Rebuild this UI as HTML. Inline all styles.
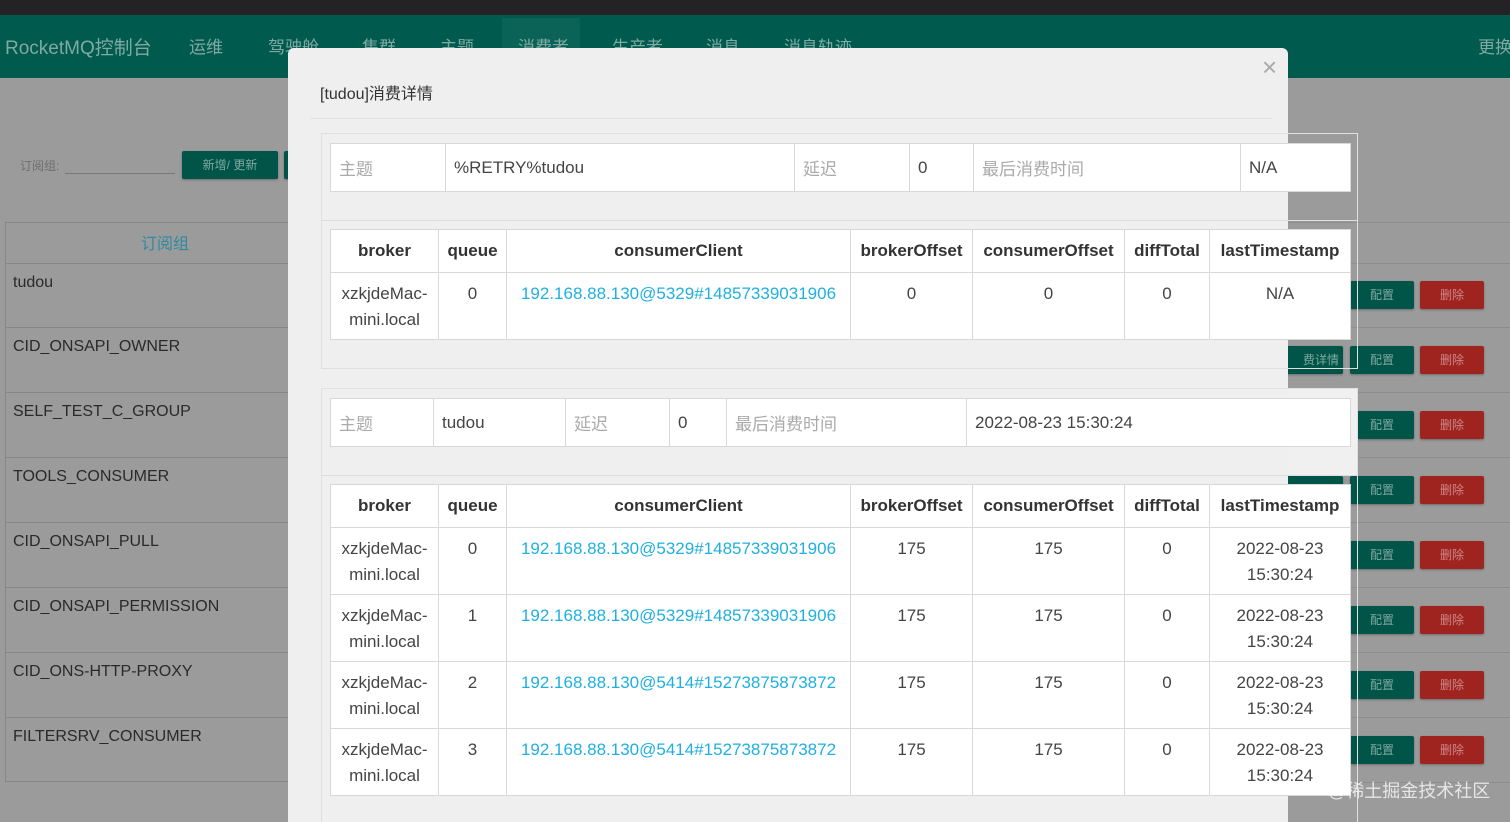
<!DOCTYPE html>
<html style="width:1510px;height:822px;overflow:hidden"><head><meta charset="utf-8"><style>
*{margin:0;padding:0;box-sizing:border-box}
body{width:1510px;height:822px;overflow:hidden;position:relative;background:#9b9b9b;font-family:"Liberation Sans","Noto Sans CJK SC",sans-serif;color:#333}
.a{position:absolute}
.top{left:0;top:0;width:1510px;height:15px;background:#232325}
.nav{left:0;top:15px;width:1510px;height:63px;background:#005a4e;color:#7fa9a2;font-size:17px}
.nav span{position:absolute;top:18px;white-space:nowrap}
.row{left:5px;width:300px;height:65px;border-top:1px solid #878787;font-size:16px;color:#2a2a2a;padding:10px 8px}
.btn{height:28px;width:64px;font-size:12px;color:#7fa9a2;text-align:center;line-height:28px;border-radius:2px;box-shadow:0 1px 2px rgba(0,0,0,.3)}
.g{background:#005448}.r{background:#9f2420;color:#c88}
.hl{left:290px;width:1220px;height:1px;background:#8e8e8e}
.modal{left:288px;top:48px;width:1000px;height:774px;background:#efefef;border-radius:6px 6px 0 0}
.panel{border:1px solid #ddd;left:321px;width:1037px}
table{position:absolute;border-collapse:collapse;background:#fff;table-layout:fixed;font-size:17px}
td,th{border:1px solid #d8d8d8;padding:0 8px;vertical-align:top}
th{font-weight:bold;color:#333;text-align:center;vertical-align:middle}
.info td{height:48px;vertical-align:middle;color:#444}
.info td.l{color:#aaa}
.d td{text-align:center;height:67px;padding-top:8px;line-height:26px;color:#444}
.d td.c{color:#1fb0e0}
</style></head><body>
<div class="a top"></div>
<div class="a nav">
<span style="left:5px;font-size:19px">RocketMQ控制台</span>
<span style="left:189px">运维</span><span style="left:268px">驾驶舱</span><span style="left:362px">集群</span><span style="left:440px">主题</span>
<span style="left:502px;top:3px;width:78px;height:60px;background:#0b6357"></span>
<span style="left:518px">消费者</span><span style="left:612px">生产者</span><span style="left:706px">消息</span><span style="left:784px">消息轨迹</span>
<span style="left:1478px">更换</span>
</div>
<div class="a" style="left:20px;top:157px;font-size:12px;color:#6e6e6e">订阅组:</div>
<div class="a" style="left:65px;top:173px;width:110px;height:1px;background:#777"></div>
<div class="a btn g" style="left:182px;top:151px;width:96px;height:28px">新增/ 更新</div>
<div class="a btn g" style="left:284px;top:151px;width:10px"></div>
<div class="a" style="left:5px;top:222px;width:300px;height:560px;border:1px solid #878787;border-right:none"></div>
<div class="a" style="left:5px;top:230px;width:320px;text-align:center;font-size:16px;color:#2f8aa0">订阅组</div>
<div class="a row" style="top:263px">tudou</div>
<div class="a row" style="top:327px">CID_ONSAPI_OWNER</div>
<div class="a row" style="top:392px">SELF_TEST_C_GROUP</div>
<div class="a row" style="top:457px">TOOLS_CONSUMER</div>
<div class="a row" style="top:522px">CID_ONSAPI_PULL</div>
<div class="a row" style="top:587px">CID_ONSAPI_PERMISSION</div>
<div class="a row" style="top:652px">CID_ONS-HTTP-PROXY</div>
<div class="a row" style="top:717px">FILTERSRV_CONSUMER</div>
<div class="a hl" style="top:222px"></div><div class="a hl" style="top:263px"></div>
<div class="a hl" style="top:327px"></div><div class="a hl" style="top:392px"></div><div class="a hl" style="top:457px"></div><div class="a hl" style="top:522px"></div><div class="a hl" style="top:587px"></div><div class="a hl" style="top:652px"></div><div class="a hl" style="top:717px"></div><div class="a hl" style="top:782px"></div>
<div class="a btn g" style="left:1350px;top:281px">配置</div><div class="a btn r" style="left:1420px;top:281px">删除</div>
<div class="a btn g" style="left:1278px;top:346px;width:65px;text-align:right;padding-right:4px">费详情</div>
<div class="a btn g" style="left:1350px;top:346px">配置</div><div class="a btn r" style="left:1420px;top:346px">删除</div>
<div class="a btn g" style="left:1350px;top:411px">配置</div><div class="a btn r" style="left:1420px;top:411px">删除</div>
<div class="a btn g" style="left:1278px;top:476px;width:65px"></div>
<div class="a btn g" style="left:1350px;top:476px">配置</div><div class="a btn r" style="left:1420px;top:476px">删除</div>
<div class="a btn g" style="left:1350px;top:541px">配置</div><div class="a btn r" style="left:1420px;top:541px">删除</div>
<div class="a btn g" style="left:1350px;top:606px">配置</div><div class="a btn r" style="left:1420px;top:606px">删除</div>
<div class="a btn g" style="left:1350px;top:671px">配置</div><div class="a btn r" style="left:1420px;top:671px">删除</div>
<div class="a btn g" style="left:1350px;top:736px">配置</div><div class="a btn r" style="left:1420px;top:736px">删除</div>

<div class="a modal"></div>
<div class="a" style="left:1262px;top:52px;font-size:26px;color:#aaa">×</div>
<div class="a" style="left:320px;top:80px;font-size:16px;color:#333">[tudou]消费详情</div>
<div class="a" style="left:310px;top:118px;width:962px;height:1px;background:#e2e2e2"></div>

<div class="a panel" style="top:133px;height:236px;border-color:#e0e0e0"></div>
<div class="a" style="left:321px;top:220px;width:1037px;height:1px;background:#ddd"></div>
<table class="info" style="left:330px;top:143px;width:1020px">
<col style="width:115px"><col style="width:349px"><col style="width:115px"><col style="width:64px"><col style="width:267px"><col style="width:110px">
<tr><td class="l">主题</td><td>%RETRY%tudou</td><td class="l">延迟</td><td>0</td><td class="l">最后消费时间</td><td>N/A</td></tr></table>
<table class="d" style="left:330px;top:229px;width:1020px">
<col style="width:108px"><col style="width:68px"><col style="width:344px"><col style="width:122px"><col style="width:152px"><col style="width:85px"><col style="width:141px">
<tr style="height:43px"><th>broker</th><th>queue</th><th>consumerClient</th><th>brokerOffset</th><th>consumerOffset</th><th>diffTotal</th><th>lastTimestamp</th></tr>
<tr><td>xzkjdeMac-mini.local</td><td>0</td><td class="c">192.168.88.130@5329#14857339031906</td><td>0</td><td>0</td><td>0</td><td>N/A</td></tr></table>

<div class="a" style="left:1288px;top:389px;width:70px;height:86px;background:#f0f0f0"></div>
<div class="a panel" style="top:388px;height:434px;border-color:#e0e0e0;border-bottom:none"></div>
<div class="a" style="left:321px;top:475px;width:1037px;height:1px;background:#ddd"></div>
<table class="info" style="left:330px;top:398px;width:1020px">
<col style="width:103px"><col style="width:132px"><col style="width:104px"><col style="width:57px"><col style="width:240px"><col style="width:384px">
<tr><td class="l">主题</td><td>tudou</td><td class="l">延迟</td><td>0</td><td class="l">最后消费时间</td><td>2022-08-23 15:30:24</td></tr></table>
<table class="d" style="left:330px;top:484px;width:1020px">
<col style="width:108px"><col style="width:68px"><col style="width:344px"><col style="width:122px"><col style="width:152px"><col style="width:85px"><col style="width:141px">
<tr style="height:43px"><th>broker</th><th>queue</th><th>consumerClient</th><th>brokerOffset</th><th>consumerOffset</th><th>diffTotal</th><th>lastTimestamp</th></tr>
<tr><td>xzkjdeMac-mini.local</td><td>0</td><td class="c">192.168.88.130@5329#14857339031906</td><td>175</td><td>175</td><td>0</td><td>2022-08-23 15:30:24</td></tr>
<tr><td>xzkjdeMac-mini.local</td><td>1</td><td class="c">192.168.88.130@5329#14857339031906</td><td>175</td><td>175</td><td>0</td><td>2022-08-23 15:30:24</td></tr>
<tr><td>xzkjdeMac-mini.local</td><td>2</td><td class="c">192.168.88.130@5414#15273875873872</td><td>175</td><td>175</td><td>0</td><td>2022-08-23 15:30:24</td></tr>
<tr><td>xzkjdeMac-mini.local</td><td>3</td><td class="c">192.168.88.130@5414#15273875873872</td><td>175</td><td>175</td><td>0</td><td>2022-08-23 15:30:24</td></tr>
</table>
<div class="a" style="left:1328px;top:777px;font-size:18px;color:rgba(255,255,255,.75)">@稀土掘金技术社区</div>
</body></html>
